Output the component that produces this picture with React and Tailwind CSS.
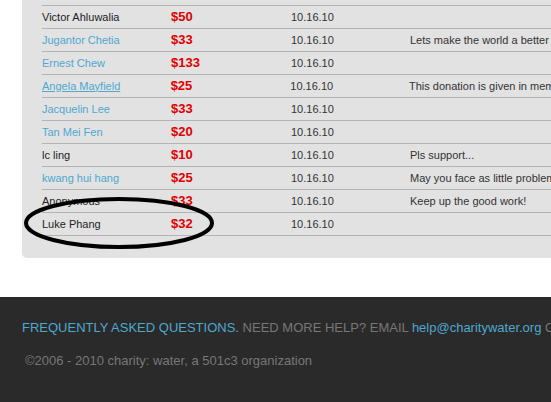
import React from 'react';

const donations = [
	{ name: 'Victor Ahluwalia', link: false, amount: '$50', date: '10.16.10', note: '' },
	{ name: 'Jugantor Chetia', link: true, amount: '$33', date: '10.16.10', note: 'Lets make the world a better place' },
	{ name: 'Ernest Chew', link: true, amount: '$133', date: '10.16.10', note: '' },
	{ name: 'Angela Mayfield', link: true, underline: true, amount: '$25', date: '10.16.10', note: 'This donation is given in memory of' },
	{ name: 'Jacquelin Lee', link: true, amount: '$33', date: '10.16.10', note: '' },
	{ name: 'Tan Mei Fen', link: true, amount: '$20', date: '10.16.10', note: '' },
	{ name: 'lc ling', link: false, amount: '$10', date: '10.16.10', note: 'Pls support...' },
	{ name: 'kwang hui hang', link: true, amount: '$25', date: '10.16.10', note: 'May you face as little problems' },
	{ name: 'Anonymous', link: false, amount: '$33', date: '10.16.10', note: 'Keep up the good work!' },
	{ name: 'Luke Phang', link: false, amount: '$32', date: '10.16.10', note: '' },
];

export default function App() {
	return (
		<div className="w-[551px] h-[402px] overflow-hidden bg-white font-['Liberation_Sans',Arial,sans-serif]">
			{/* Donor list panel */}
			<div className="relative ml-[22px] w-[560px] h-[258px] bg-[#e2e2e2] rounded-bl-[5px] pl-[20px] pt-[5px]">
				<div className="border-t border-[#b4b4b4]">
					{donations.map((d, i) => (
						<div key={i} className="flex items-center h-[23px] border-b border-[#b4b4b4] text-[11px] whitespace-nowrap">
							<div className="w-[129px]">
								<span className={d.link ? (d.underline ? 'text-[#4ea8cf] underline' : 'text-[#4ea8cf]') : 'text-[#222]'}>{d.name}</span>
							</div>
							<div className="w-[120px] text-[13px] font-bold text-[#e00000]">{d.amount}</div>
							<div className="w-[119px] text-[#333]">{d.date}</div>
							<div className="text-[#333]">{d.note}</div>
						</div>
					))}
				</div>
				{/* hand-drawn circle */}
				<svg className="absolute left-[1px] top-[196px]" width="194" height="54" viewBox="0 0 194 54">
					<ellipse cx="96" cy="27" rx="93" ry="24" fill="none" stroke="#000" strokeWidth="4" />
				</svg>
			</div>

			{/* Footer */}
			<div className="mt-[39px] h-[105px] bg-[#2a2a2a] pl-[22px] pt-[21px] whitespace-nowrap">
				<div className="text-[13px] text-[#777]">
					<span className="text-[#4ea8cf]">FREQUENTLY ASKED QUESTIONS.</span> NEED MORE HELP? EMAIL <span className="text-[#4ea8cf]">help@charitywater.org</span> OR CALL
				</div>
				<div className="mt-[13px] ml-[3px] text-[13px] text-[#777]">
					©2006 - 2010 charity: water, a 501c3 organization
				</div>
			</div>
		</div>
	);
}
